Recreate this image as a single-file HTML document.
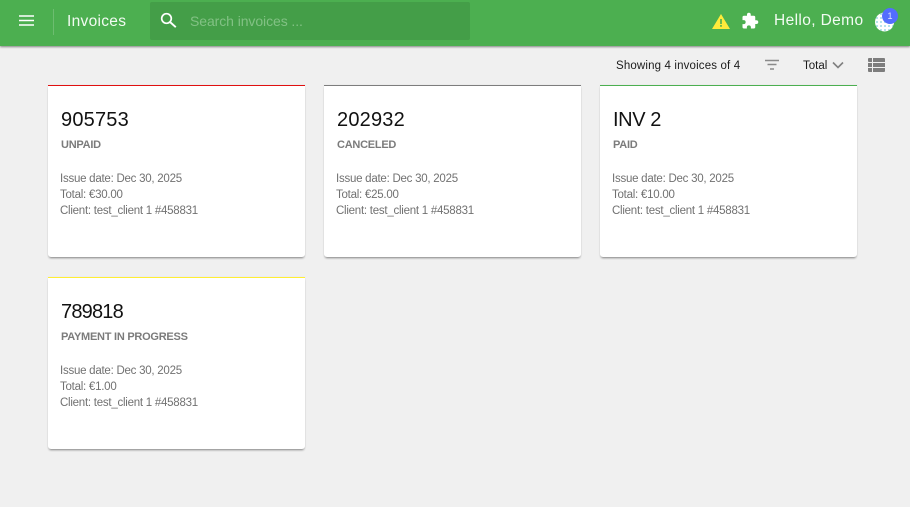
<!DOCTYPE html>
<html>
<head>
<meta charset="utf-8">
<style>
html,body{margin:0;padding:0;width:910px;height:507px;overflow:hidden;background:#f0f0f0;font-family:"Liberation Sans",sans-serif}
.a{position:absolute;white-space:nowrap}
#bar{position:absolute;left:0;top:0;width:910px;height:46px;background:#4caf50;box-shadow:0 1px 2px rgba(0,0,0,.45)}
.card{position:absolute;width:257px;height:172px;background:#fff;border-radius:0 0 3px 3px;box-shadow:0 2px 2px -1px rgba(0,0,0,.45),0 0 2px rgba(0,0,0,.06);box-sizing:border-box}
.card i{position:absolute;left:0;top:0;width:100%;height:1px;display:block}
.t{position:absolute;left:13px;top:23px;font-size:20px;line-height:24px;color:#111;white-space:nowrap;letter-spacing:.2px}
.s{position:absolute;left:13px;top:53px;font-size:11px;line-height:14px;font-weight:bold;color:#7b7b7b;white-space:nowrap;letter-spacing:-.25px}
.d{position:absolute;left:12px;top:86px;font-size:11.5px;line-height:16px;color:#717171;white-space:nowrap;letter-spacing:-.25px}
</style>
</head>
<body>
<div id="bar"></div>
<svg class="a" style="left:18px;top:14px" width="17" height="13" viewBox="0 0 17 13"><path d="M1 2h15M1 6.500h15M1 11h15" stroke="#fff" stroke-width="1.600"/></svg>
<div class="a" style="left:53px;top:9px;width:1px;height:26px;background:#6dbd70"></div>
<div class="a" style="left:67px;top:13px;font-size:15.500px;line-height:18px;color:#f2fbf2;letter-spacing:.3px">Invoices</div>
<div class="a" style="left:150px;top:2px;width:320px;height:38px;background:#449e48;border-radius:2px"></div>
<svg class="a" style="left:160px;top:12px" width="17" height="17" viewBox="0 0 17 17"><circle cx="6.500" cy="6.500" r="4.800" fill="none" stroke="#fff" stroke-width="1.700"/><path d="M10 10l5.800 5.200" stroke="#fff" stroke-width="1.900"/></svg>
<div class="a" style="left:190px;top:13px;font-size:14px;line-height:17px;color:#82c184;letter-spacing:-.08px">Search invoices ...</div>
<svg class="a" style="left:712px;top:14px" width="18" height="15" viewBox="0 0 18 15"><path d="M9 0L18 15H0Z" fill="#ffeb3b"/><path d="M8.200 5h1.600v5H8.200zM8.200 11h1.600v1.700H8.200z" fill="#4caf50"/></svg>
<svg class="a" style="left:741px;top:12px" width="18" height="18" viewBox="0 0 24 24"><path fill="#fff" d="M20.500 11H19V7a2 2 0 0 0-2-2h-4V3.500a2.500 2.500 0 0 0-5 0V5H4a2 2 0 0 0-2 2v3.800h1.500a2.700 2.700 0 0 1 0 5.400H2V20a2 2 0 0 0 2 2h3.800v-1.500a2.700 2.700 0 0 1 5.400 0V22H17a2 2 0 0 0 2-2v-4h1.500a2.500 2.500 0 0 0 0-5z"/></svg>
<div class="a" style="left:774px;top:12px;font-size:15.500px;line-height:18px;color:#f2fbf2;letter-spacing:.38px">Hello, Demo</div>
<svg class="a" style="left:875px;top:8px" width="24" height="24" viewBox="0 0 24 24"><defs><pattern id="p" width="4" height="4" patternUnits="userSpaceOnUse"><rect width="4" height="4" fill="#fff"/><circle cx="2" cy="2" r="1" fill="#9fdbe6"/></pattern></defs><circle cx="9.500" cy="14" r="9.500" fill="url(#p)"/><circle cx="15" cy="8" r="8" fill="#536dfe"/><text x="15" y="11" font-family="Liberation Sans" font-size="9" fill="#dfe4ff" text-anchor="middle">1</text></svg>

<div class="a" style="left:616px;top:59px;font-size:11.500px;line-height:14px;color:#1c1c1c;letter-spacing:.15px">Showing 4 invoices of 4</div>
<svg class="a" style="left:764px;top:59px" width="16" height="12" viewBox="0 0 16 12"><path d="M1 1.500h14M3.500 5.500h9M6 10h4" stroke="#8a8a8a" stroke-width="1.500"/></svg>
<div class="a" style="left:803px;top:59px;font-size:11.500px;line-height:14px;color:#1c1c1c">Total</div>
<svg class="a" style="left:832px;top:61px" width="12" height="8" viewBox="0 0 12 8"><path d="M1 1.500l5 5 5-5" fill="none" stroke="#808080" stroke-width="1.600"/></svg>
<svg class="a" style="left:868px;top:58px" width="17" height="14" viewBox="0 0 17 14"><path fill="#7d7d7d" d="M0 1a1 1 0 0 1 1-1h3v4H1a1 1 0 0 1-1-1zM5 0h11a1 1 0 0 1 1 1v3H5zM0 5h4v4H0zM5 5h12v4H5zM0 10h4v4H1a1 1 0 0 1-1-1zM5 10h12v3a1 1 0 0 1-1 1H5z"/></svg>

<div class="card" style="left:48px;top:85px"><i style="background:#e01010"></i><div class="t">905753</div><div class="s">UNPAID</div><div class="d">Issue date: Dec 30, 2025<br>Total: €30.00<br>Client: test_client 1 #458831</div></div>
<div class="card" style="left:324px;top:85px"><i style="background:#7d7d7d"></i><div class="t">202932</div><div class="s">CANCELED</div><div class="d">Issue date: Dec 30, 2025<br>Total: €25.00<br>Client: test_client 1 #458831</div></div>
<div class="card" style="left:600px;top:85px"><i style="background:#4caf50"></i><div class="t" style="letter-spacing:-.4px">INV 2</div><div class="s">PAID</div><div class="d">Issue date: Dec 30, 2025<br>Total: €10.00<br>Client: test_client 1 #458831</div></div>
<div class="card" style="left:48px;top:277px"><i style="background:#ffee33"></i><div class="t" style="letter-spacing:-.8px">789818</div><div class="s">PAYMENT IN PROGRESS</div><div class="d">Issue date: Dec 30, 2025<br>Total: €1.00<br>Client: test_client 1 #458831</div></div>
</body>
</html>
